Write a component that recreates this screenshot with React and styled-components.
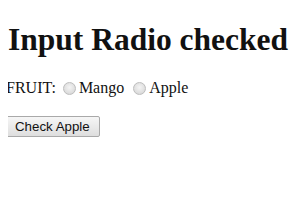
import styled, { createGlobalStyle } from "styled-components";

const GlobalStyle = createGlobalStyle`
  body {
    margin: 8px;
    background: #ffffff;
    font-family: "Liberation Serif", "Times New Roman", serif;
    color: #111111;
    overflow: hidden;
  }
`;

const Title = styled.h1`
  font-size: 31.5px;
  font-weight: bold;
  margin: 14px 0 21px;
  white-space: nowrap;
`;

const Row = styled.div`
  display: flex;
  align-items: center;
  font-size: 16px;
  height: 18px;
  margin-top: 1px;
  margin-left: -2px;
`;

const Label = styled.span`
  margin-right: 7px;
`;

const Radio = styled.input.attrs({ type: "radio" })`
  appearance: none;
  width: 13px;
  height: 13px;
  margin: 0 3px 0 0;
  border-radius: 50%;
  border: 1px solid #bdbdbd;
  background: radial-gradient(circle at 50% 40%, #f4f4f4 0%, #dcdcdc 70%, #cfcfcf 100%);
`;

const Choice = styled.label`
  display: flex;
  align-items: center;
  margin-right: 9px;
`;

const Button = styled.button`
  margin-top: 19px;
  margin-left: -3px;
  height: 21px;
  padding: 0 9px;
  font-family: "Liberation Sans", Arial, sans-serif;
  font-size: 13.3px;
  color: #111;
  border: 1px solid #a9a9a9;
  border-radius: 2px;
  background: linear-gradient(#f6f6f6, #dedede);
`;

export default function App() {
  return (
    <>
      <GlobalStyle />
      <Title>Input Radio checked property</Title>
      <form>
        <Row>
          <Label>FRUIT:</Label>
          <Choice>
            <Radio name="fruit" value="mango" />
            Mango
          </Choice>
          <Choice>
            <Radio name="fruit" value="apple" />
            Apple
          </Choice>
        </Row>
        <Button type="button">Check Apple</Button>
      </form>
    </>
  );
}
